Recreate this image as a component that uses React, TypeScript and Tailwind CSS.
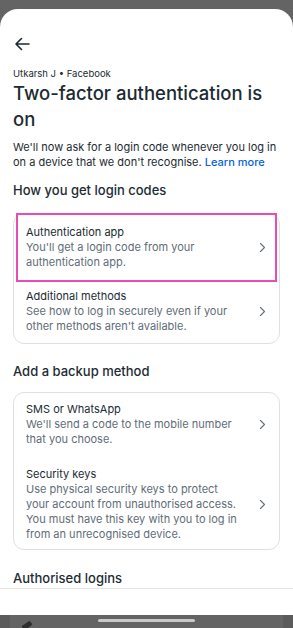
import React from "react";

function Chevron() {
  return (
    <svg width="7" height="11" viewBox="0 0 7 11" fill="none" className="shrink-0">
      <path d="M1.5 1.5L5.5 5.5l-4 4" stroke="#65707b" strokeWidth="1.1" strokeLinecap="round" strokeLinejoin="round" />
    </svg>
  );
}

function RowText({ title, sub }: { title: string; sub: string }) {
  return (
    <div className="w-[217px] min-w-0">
      <p className="text-[11px] leading-[15px] text-[#1c2b33]">{title}</p>
      <p className="text-[11px] leading-[15px] text-[#5f6c78]">{sub}</p>
    </div>
  );
}

export default function App() {
  return (
    <div
      className="flex h-[628px] w-[293px] flex-col overflow-hidden bg-[#646464] pt-[9px]"
      style={{ fontFamily: "Inter, Roboto, 'Noto Sans', sans-serif" }}
    >
      <div className="flex-1 overflow-hidden rounded-t-[18px] bg-white">
        <div className="px-[13px] pt-[28px]">
          <svg width="16" height="14" viewBox="0 0 16 14" fill="none" className="ml-[1px]">
            <path d="M15 7H2M7.5 1.5L2 7l5.5 5.5" stroke="#1c2b33" strokeWidth="1.6" strokeLinecap="round" strokeLinejoin="round" />
          </svg>
          <p className="mt-[16px] text-[9.5px] leading-[13px] text-[#1c2b33]">Utkarsh J • Facebook</p>
          <h1 className="text-[18.5px] font-medium leading-[26px] text-[#1c2b33]">
            Two-factor authentication is on
          </h1>
          <p className="mt-[8px] text-[11px] leading-[15px] text-[#1c2b33]">
            We'll now ask for a login code whenever you log in on a device that we don't recognise.{" "}
            <span className="font-medium text-[#0064e0]">Learn more</span>
          </p>
          <h2 className="mt-[11px] text-[13px] font-medium leading-[18px] text-[#1c2b33]">
            How you get login codes
          </h2>
          <div className="mt-[14px] rounded-[11px] border border-[#dde1e5]">
            <div className="mx-[2px] -mt-[1px] flex items-center justify-between border-2 border-[#ea4bb4] pt-[9.5px] pb-[10.5px] pl-[8px] pr-[9px]">
              <RowText title="Authentication app" sub="You'll get a login code from your authentication app." />
              <Chevron />
            </div>
            <div className="flex items-center justify-between pt-[6.5px] pb-[9.5px] pl-[12px] pr-[13px]">
              <RowText
                title="Additional methods"
                sub="See how to log in securely even if your other methods aren't available."
              />
              <Chevron />
            </div>
          </div>
          <h2 className="mt-[18px] text-[13px] font-medium leading-[18px] text-[#1c2b33]">
            Add a backup method
          </h2>
          <div className="mt-[12px] flex flex-col gap-[20px] rounded-[11px] border border-[#dde1e5] pt-[8.5px] pb-[7.5px] pl-[12px] pr-[13px]">
            <div className="flex items-center justify-between">
              <RowText title="SMS or WhatsApp" sub="We'll send a code to the mobile number that you choose." />
              <Chevron />
            </div>
            <div className="flex items-center justify-between">
              <RowText
                title="Security keys"
                sub="Use physical security keys to protect your account from unauthorised access. You must have this key with you to log in from an unrecognised device."
              />
              <Chevron />
            </div>
          </div>
          <h2 className="mt-[19px] text-[13px] font-medium leading-[18px] text-[#1c2b33]">
            Authorised logins
          </h2>
        </div>
        <div className="mt-[1px] border-t border-[#e4e6e8]" />
      </div>
      <div className="flex h-[13px] bg-[#5b5b5b]">
        <div className="ml-[10px] mr-[10px] flex-1 bg-[#646464] pt-[4px]">
          <div className="mx-auto h-[3px] w-[97px] rounded-full bg-[#c9c9c9]" />
          <div className="ml-[12px] mt-[1px] h-[5px] w-[10px] rotate-[-35deg] rounded-[1px] bg-[#2e2e2e]" />
        </div>
      </div>
    </div>
  );
}
